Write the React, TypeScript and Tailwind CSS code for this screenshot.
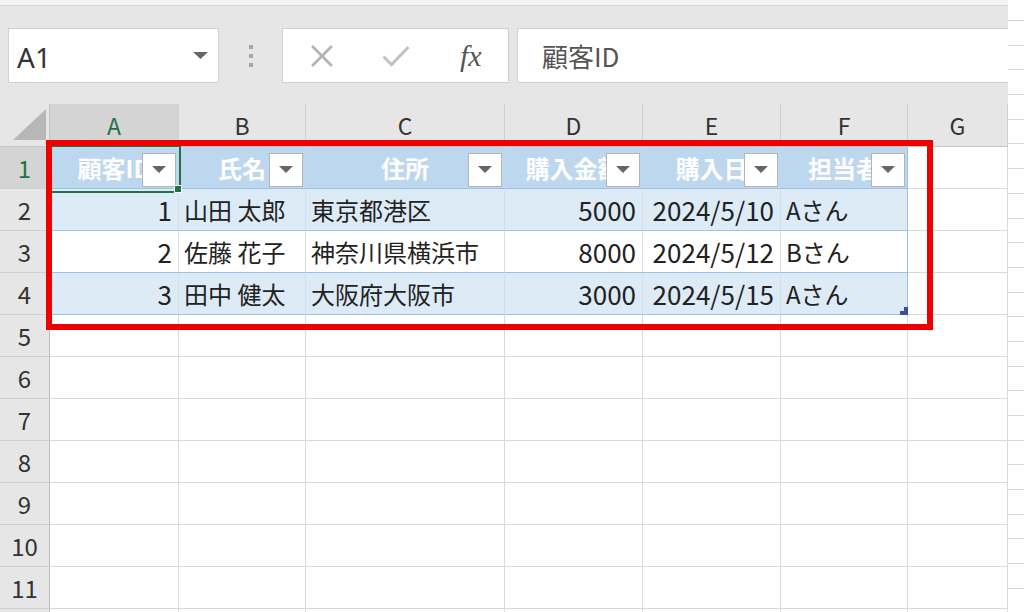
import type { ReactNode } from 'react'

const cols = [
  { l: 'A', w: 129 },
  { l: 'B', w: 127 },
  { l: 'C', w: 199 },
  { l: 'D', w: 138 },
  { l: 'E', w: 138 },
  { l: 'F', w: 127 },
  { l: 'G', w: 100 },
]

const header = ['顧客ID', '氏名', '住所', '購入金額', '購入日', '担当者']
const data = [
  ['1', '山田 太郎', '東京都港区', '5000', '2024/5/10', 'Aさん'],
  ['2', '佐藤 花子', '神奈川県横浜市', '8000', '2024/5/12', 'Bさん'],
  ['3', '田中 健太', '大阪府大阪市', '3000', '2024/5/15', 'Aさん'],
]
const align = ['right', 'left', 'left', 'right', 'right', 'left']

const font = { fontFamily: '"Noto Sans CJK JP", "Noto Sans", sans-serif' }

function FilterButton() {
  return (
    <div className="absolute right-[2px] top-[6px] flex h-[34px] w-[34px] items-center justify-center border border-[#b4b4b4] bg-white">
      <svg width="14" height="8" viewBox="0 0 14 8">
        <path d="M0 0h14L7 7z" fill="#666" />
      </svg>
    </div>
  )
}

function Cell({ row, col, w }: { row: number; col: number; w: number }) {
  const inTable = row <= 3 && col <= 5
  if (!inTable) {
    return <div style={{ width: w }} className="h-[42px] shrink-0 border-b border-r border-[#d9d9d9] bg-white" />
  }
  if (row === 0) {
    return (
      <div
        style={{ width: w }}
        className={
          'relative flex h-[42px] shrink-0 items-center justify-center overflow-hidden border-b border-[#9bc2e6] bg-[#bdd7ee] ' +
          (col === 5 ? 'border-r border-r-[#9bc2e6]' : 'border-r border-r-[#bdd7ee]')
        }
      >
        <span className="whitespace-nowrap text-[24px] font-bold leading-none text-white">{header[col]}</span>
        <FilterButton />
      </div>
    )
  }
  const shaded = row % 2 === 1
  const right = align[col] === 'right'
  return (
    <div
      style={{ width: w }}
      className={
        'flex h-[42px] shrink-0 items-center overflow-hidden border-b border-[#9bc2e6] ' +
        (shaded ? 'bg-[#ddebf7] ' : 'bg-white ') +
        (col === 5 ? 'border-r border-r-[#9bc2e6] ' : shaded ? 'border-r border-r-[#d3dfea] ' : 'border-r border-r-[#dcdcdc] ') +
        (right ? 'justify-end pr-[6px]' : 'justify-start pl-[5px]')
      }
    >
      <span className={'whitespace-nowrap leading-none text-[#222] ' + (right ? 'text-[26px]' : 'text-[24px]')}>
        {data[row - 1][col]}
      </span>
    </div>
  )
}

function IconButton({ children }: { children: ReactNode }) {
  return <div className="flex w-[75px] items-center justify-center">{children}</div>
}

export default function App() {
  const rows = Array.from({ length: 11 }, (_, i) => i)

  return (
    <div style={font} className="relative flex h-[612px] w-[1024px] items-start overflow-hidden bg-white">
      <div className="flex w-[1008px] shrink-0 flex-col">
        {/* formula bar */}
        <div className="h-[6px] shrink-0 border-b border-[#d6d6d6] bg-[#f2f2f2]" />
        <div className="flex h-[98px] shrink-0 items-start bg-[#e6e6e6] pl-[8px] pt-[22px]">
          <div className="flex h-[55px] w-[211px] items-center justify-between border border-[#d0d0d0] bg-white pl-[8px] pr-[10px]">
            <span style={{ fontFamily: '"Noto Sans", sans-serif' }} className="pt-[2px] text-[28px] leading-none text-[#333]">
              A1
            </span>
            <svg width="15" height="8" viewBox="0 0 15 8">
              <path d="M0 0h15L7.5 7z" fill="#666" />
            </svg>
          </div>
          <div className="flex h-[55px] w-[63px] flex-col items-center justify-center gap-[5px]">
            <div className="h-[4px] w-[4px] bg-[#a8a8a8]" />
            <div className="h-[4px] w-[4px] bg-[#a8a8a8]" />
            <div className="h-[4px] w-[4px] bg-[#a8a8a8]" />
          </div>
          <div className="flex h-[55px] w-[227px] items-stretch border border-[#d0d0d0] bg-white pl-[2px]">
            <IconButton>
              <svg width="24" height="22" viewBox="0 0 24 22">
                <path d="M2 1l20 20M22 1L2 21" stroke="#b3b3b3" strokeWidth="2.6" fill="none" />
              </svg>
            </IconButton>
            <IconButton>
              <svg width="28" height="22" viewBox="0 0 28 22">
                <path d="M1.5 11.5l8 8L26.5 2" stroke="#c2c2c2" strokeWidth="3" fill="none" />
              </svg>
            </IconButton>
            <IconButton>
              <span
                style={{ fontFamily: '"Liberation Serif", serif' }}
                className="text-[30px] italic leading-none text-[#555]"
              >
                fx
              </span>
            </IconButton>
          </div>
          <div className="ml-[8px] flex h-[55px] flex-1 items-center border border-r-0 border-[#d0d0d0] bg-white pl-[24px]">
            <span className="text-[26px] leading-none text-[#555]">顧客ID</span>
          </div>
        </div>

        {/* column headers */}
        <div className="flex h-[43px] shrink-0">
          <div className="relative h-[43px] w-[50px] shrink-0 border-b border-r border-[#c6c6c6] bg-[#e6e6e6]">
            <svg className="absolute left-0 top-0" width="50" height="43" viewBox="0 0 50 43">
              <path d="M13 36H46V5z" fill="#b7b7b7" />
            </svg>
          </div>
          {cols.map((c) => (
            <div
              key={c.l}
              style={{ width: c.w }}
              className={
                'flex h-[43px] shrink-0 items-center justify-center border-b border-r border-b-[#c6c6c6] border-r-[#d0d0d0] text-[23px] ' +
                (c.l === 'A' ? 'bg-[#d4d4d4] text-[#217346]' : 'bg-[#e6e6e6] text-[#333]')
              }
            >
              {c.l}
            </div>
          ))}
        </div>

        {/* rows */}
        {rows.map((r) => (
          <div key={r} className="flex h-[42px] shrink-0">
            <div
              className={
                'flex h-[42px] w-[50px] shrink-0 items-center justify-center border-b border-r border-b-[#d0d0d0] border-r-[#bdbdbd] text-[24px] ' +
                (r === 0 ? 'bg-[#d4d4d4] text-[#217346]' : 'bg-[#e6e6e6] text-[#333]')
              }
            >
              {r + 1}
            </div>
            {cols.map((c, ci) => (
              <Cell key={c.l} row={r} col={ci} w={c.w} />
            ))}
          </div>
        ))}
        <div className="flex h-[10px] shrink-0">
          <div className="w-[50px] shrink-0 border-r border-[#bdbdbd] bg-[#e6e6e6]" />
          {cols.map((c) => (
            <div key={c.l} style={{ width: c.w }} className="shrink-0 border-r border-[#d9d9d9]" />
          ))}
        </div>
      </div>

      {/* clipped right strip */}
      <div className="flex w-[16px] shrink-0 flex-col bg-white">
        <div className="h-[21px] shrink-0 border-b border-[#cfcfcf]" />
        {Array.from({ length: 24 }, (_, i) => (
          <div key={i} className="h-[24.7px] shrink-0 border-b border-[#d6d6d6]" />
        ))}
      </div>

      {/* active cell */}
      <div className="pointer-events-none absolute left-[48px] top-[145px] h-[48px] w-[133px] border-2 border-[#217346]" />
      <div className="absolute left-[174px] top-[185px] h-[8px] w-[8px] border border-white bg-[#217346]" />

      {/* table resize handle */}
      <svg className="absolute left-[900px] top-[307px]" width="8" height="8" viewBox="0 0 8 8">
        <path d="M4 0h4v8H0V4h4z" fill="#3c4d9c" />
      </svg>

      {/* annotation box */}
      <div className="pointer-events-none absolute left-[46px] top-[140px] h-[190px] w-[887px] border-[6px] border-[#ee0000]" />
    </div>
  )
}
